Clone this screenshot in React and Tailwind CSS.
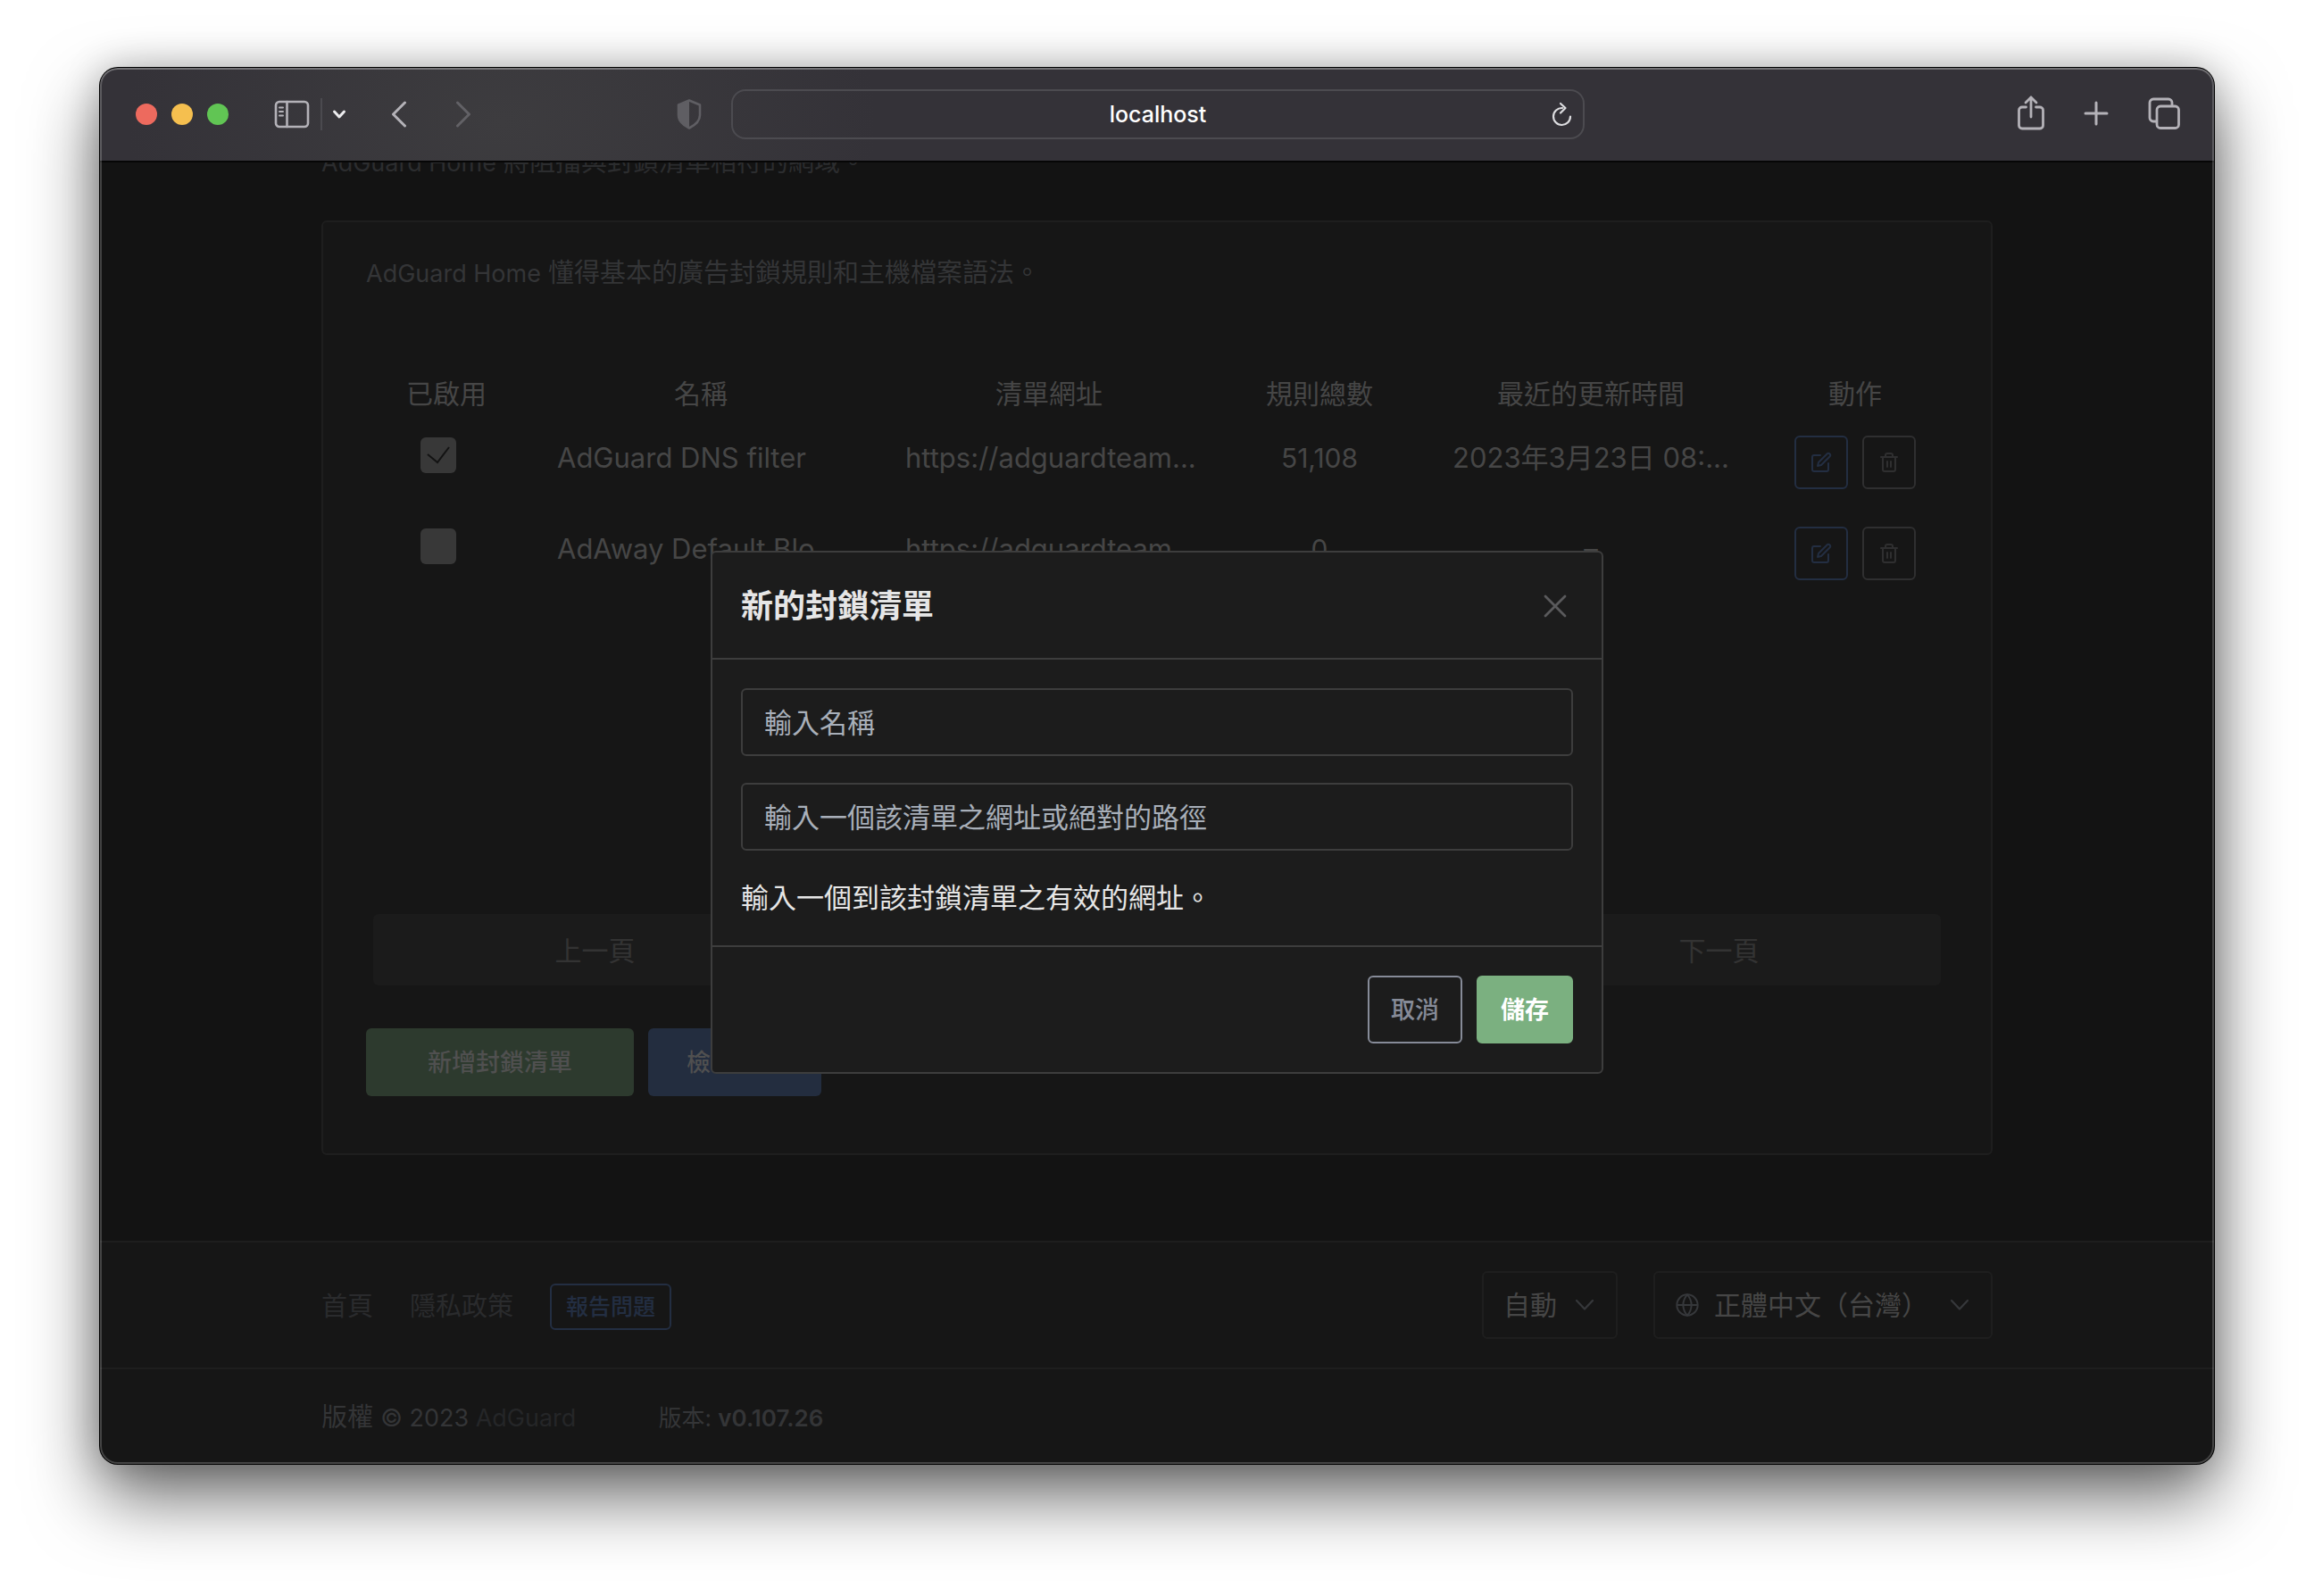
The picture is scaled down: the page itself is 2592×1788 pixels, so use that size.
import React, { useState } from 'react';

const ROWS = [
  { name: 'AdGuard DNS filter', url: 'https://adguardteam...', rules: '51,108', updated: '2023年3月23日 08:...', enabled: true },
  { name: 'AdAway Default Blo...', url: 'https://adguardteam...', rules: '0', updated: '–', enabled: false },
];

export default function App() {
  return (
    <div className="min-h-screen bg-white px-28 pt-[76px] pb-[148px] font-['Inter','Noto_Sans_CJK_TC',sans-serif]">
      <div className="relative overflow-hidden rounded-[20px] bg-[#131313] shadow-[0_0_0_1px_#000,0_0_40px_rgba(0,0,0,0.22),0_36px_80px_rgba(0,0,0,0.6)]">
        <Toolbar />
        <div className="relative overflow-hidden">
          <FiltersPage />
          <Footer />
          <div className="absolute inset-0 flex items-center justify-center pb-0.5">
            <AddListModal />
          </div>
        </div>
        <div className="pointer-events-none absolute inset-0 rounded-[20px] shadow-[inset_0_2px_0_rgba(255,255,255,0.14),inset_0_0_0_2px_rgba(255,255,255,0.2)]" />
      </div>
    </div>
  );
}

function Toolbar() {
  return (
    <header className="flex h-[106px] items-center border-b-2 border-[#060606] bg-[#343238] bg-[radial-gradient(ellipse_420px_300px_at_450px_60px,#3d3c3f,transparent)] text-[#b4b2b8]">
      <div className="flex flex-1 items-center pl-10">
        <div className="flex gap-4">
          <button type="button" aria-label="關閉" className="size-6 rounded-full bg-[#ed6a5e]" />
          <button type="button" aria-label="最小化" className="size-6 rounded-full bg-[#f5bf4f]" />
          <button type="button" aria-label="全螢幕" className="size-6 rounded-full bg-[#61c554]" />
        </div>
        <button type="button" aria-label="側邊欄" className="ml-[51px]">
          <svg width="40" height="32" viewBox="0 0 40 32" fill="none" stroke="currentColor" strokeWidth="2.6" strokeLinecap="round">
            <rect x="2" y="2" width="36" height="28" rx="4" />
            <path d="M14.5 2v28" />
            <path d="M6 8.500h4M6 13h4M6 17.500h4" strokeWidth="2" />
          </svg>
        </button>
        <span className="ml-3 h-9 w-0.5 bg-[#4b4a4f]" />
        <button type="button" aria-label="分頁群組" className="ml-[11px] text-[#ececee]">
          <svg width="16" height="12" viewBox="0 0 16 12" fill="none" stroke="currentColor" strokeWidth="3" strokeLinecap="round" strokeLinejoin="round">
            <path d="M2.500 3 8 9l5.500-6" />
          </svg>
        </button>
        <button type="button" aria-label="上一頁" className="ml-[50px]">
          <svg width="18" height="30" viewBox="0 0 18 30" fill="none" stroke="currentColor" strokeWidth="3" strokeLinecap="round" strokeLinejoin="round">
            <path d="M15.500 2 2.500 15l13 13" />
          </svg>
        </button>
        <button type="button" aria-label="下一頁" className="ml-[54px] text-[#626166]">
          <svg width="18" height="30" viewBox="0 0 18 30" fill="none" stroke="currentColor" strokeWidth="3" strokeLinecap="round" strokeLinejoin="round">
            <path d="m2.500 2 13 13-13 13" />
          </svg>
        </button>
        <button type="button" aria-label="隱私權報告" className="mr-[33px] ml-auto text-[#5f5e63]">
          <svg width="28" height="34" viewBox="0 0 28 34" fill="none">
            <path d="M14 1.500 26 6.500V18c0 6-5 11-12 14.500C7 29 2 24 2 18V6.500Z" stroke="currentColor" strokeWidth="2.600" strokeLinejoin="round" />
            <path d="M14 1.500 2 6.500V18c0 6 5 11 12 14.500Z" fill="currentColor" />
          </svg>
        </button>
      </div>

      <div className="flex h-14 w-2/5 min-w-0 max-w-[956px] grow items-center rounded-2xl border-2 border-[#4c4b50] pr-3 pl-9 text-white">
        <input aria-label="網址" defaultValue="localhost" className="min-w-0 flex-1 bg-transparent text-center text-[25px] leading-10 font-medium outline-none" />
        <button type="button" aria-label="重新載入">
          <svg width="24" height="28" viewBox="0 0 24 28" fill="none" stroke="#dddde0" strokeWidth="2.200" strokeLinecap="round" strokeLinejoin="round">
            <path d="M13 7a9.500 9.500 0 1 0 9 9.500" />
            <path d="m11 2 5.500 5-5.500 5.500" />
          </svg>
        </button>
      </div>

      <div className="flex flex-1 items-center justify-end pr-[38px] pb-0.5">
        <button type="button" aria-label="分享" className="pb-0.5">
          <svg width="32" height="40" viewBox="0 0 32 40" fill="none" stroke="currentColor" strokeWidth="2.800" strokeLinecap="round" strokeLinejoin="round">
            <path d="M10.500 14H6a3.500 3.500 0 0 0-3.500 3.500v17A3.500 3.500 0 0 0 6 38h20a3.500 3.500 0 0 0 3.500-3.500v-17A3.500 3.500 0 0 0 26 14h-4.500" />
            <path d="M16 25V3M10 9l6-6 6 6" />
          </svg>
        </button>
        <button type="button" aria-label="新增分頁" className="ml-[43px]">
          <svg width="28" height="28" viewBox="0 0 28 28" fill="none" stroke="currentColor" strokeWidth="3" strokeLinecap="round">
            <path d="M14 2v24M2 14h24" />
          </svg>
        </button>
        <button type="button" aria-label="分頁總覽" className="ml-11">
          <svg width="36" height="36" viewBox="0 0 36 36" fill="none" stroke="currentColor" strokeWidth="2.800">
            <rect x="10" y="10" width="24.500" height="24.500" rx="4" />
            <path d="M10 27H6a4 4 0 0 1-4-4V6a4 4 0 0 1 4-4h17a4 4 0 0 1 4 4v4" />
          </svg>
        </button>
      </div>
    </header>
  );
}

function FiltersPage() {
  return (
    <main className="mx-auto -mt-[22px] mb-24 max-w-[1872px]">
      <p className="mb-[42px] text-[29px] leading-[44px] text-[#2c2d2f]">
        <span className="text-[27px]">AdGuard Home</span> 將阻擋與封鎖清單相符的網域。
      </p>

      <section className="rounded-md border-2 border-[#1e1e1e] bg-[#161616] px-12 pt-[34px] pb-16">
        <p className="text-[29px] leading-[46px] text-[#343537]">
          <span className="text-[27px]">AdGuard Home</span> 懂得基本的廣告封鎖規則和主機檔案語法。
        </p>

        <div className="mt-[84px] min-h-[602px]">
          <table className="w-full table-fixed text-[#464646]">
            <colgroup>
              <col className="w-[180px]" />
              <col className="w-[390px]" />
              <col className="w-[390px]" />
              <col className="w-[216px]" />
              <col className="w-[392px]" />
              <col />
            </colgroup>
            <thead>
              <tr className="h-[54px] text-[30px]">
                <th className="font-normal">已啟用</th>
                <th className="font-normal">名稱</th>
                <th className="font-normal">清單網址</th>
                <th className="font-normal">規則總數</th>
                <th className="font-normal">最近的更新時間</th>
                <th className="pr-1 font-normal">動作</th>
              </tr>
            </thead>
            <tbody>
              {ROWS.map((row) => <FilterRow key={row.name} row={row} />)}
            </tbody>
          </table>
        </div>

        <div className="flex gap-2 p-2 text-[30px] text-[#333333]">
          <button type="button" disabled className="h-20 flex-[2] rounded-md bg-[#1b1b1b] pt-0.5">上一頁</button>
          <div className="flex-[3]" />
          <button type="button" disabled className="h-20 flex-[2] rounded-md bg-[#1b1b1b] pt-0.5">下一頁</button>
        </div>

        <div className="mt-10 flex gap-4 text-[27px] font-medium text-[#505050]">
          <button type="button" className="h-[76px] w-[300px] rounded-md bg-[#2d3a2e] pt-0.5">新增封鎖清單</button>
          <button type="button" className="h-[76px] rounded-md bg-[#232d3f] px-[43px] pt-0.5">檢查更新</button>
        </div>
      </section>
    </main>
  );
}

function FilterRow({ row }) {
  const [enabled, setEnabled] = useState(row.enabled);

  return (
    <tr className="h-[102px] align-top text-[31px] leading-[50px] whitespace-nowrap">
      <td className="pt-[22px] pr-[18px]">
        <span className="grid justify-center">
          <input type="checkbox" aria-label={row.name} checked={enabled}
                 onChange={(e) => setEnabled(e.target.checked)}
                 className="col-start-1 row-start-1 size-10 appearance-none rounded-md bg-[#383838]" />
          {enabled && (
            <svg width="40" height="40" viewBox="0 0 40 40" fill="none" stroke="#131313" strokeWidth="2"
                 className="pointer-events-none col-start-1 row-start-1">
              <path d="m8 19 11 9L32 11" />
            </svg>
          )}
        </span>
      </td>
      <td className="px-[34px] pt-5">{row.name}</td>
      <td className="px-[34px] pt-5">{row.url}</td>
      <td className="pt-5 text-center text-[30px]">{row.rules}</td>
      <td className="pt-5 text-center">{row.updated}</td>
      <td className="pt-5 pr-1">
        <div className="flex justify-center gap-4">
          <button type="button" aria-label="編輯" className="flex size-[60px] items-center justify-center rounded-md border-2 border-[#232e42] text-[#232e42]">
            <svg width="24" height="24" viewBox="0 0 24 24" fill="none" stroke="currentColor" strokeWidth="2" strokeLinecap="round" strokeLinejoin="round">
              <path d="M11 4H4a2 2 0 0 0-2 2v14a2 2 0 0 0 2 2h14a2 2 0 0 0 2-2v-7" />
              <path d="M18.500 2.500a2.121 2.121 0 0 1 3 3L12 15l-4 1 1-4 9.500-9.500z" />
            </svg>
          </button>
          <button type="button" aria-label="刪除" className="flex size-[60px] items-center justify-center rounded-md border-2 border-[#2f2f30] text-[#2f2f30]">
            <svg width="24" height="24" viewBox="0 0 24 24" fill="none" stroke="currentColor" strokeWidth="2" strokeLinecap="round" strokeLinejoin="round">
              <path d="M3 6h18" />
              <path d="M19 6v14a2 2 0 0 1-2 2H7a2 2 0 0 1-2-2V6m3 0V4a2 2 0 0 1 2-2h4a2 2 0 0 1 2 2v2" />
              <path d="M10 11v6M14 11v6" />
            </svg>
          </button>
        </div>
      </td>
    </tr>
  );
}

function Footer() {
  return (
    <footer className="bg-[#161616] text-[29px] text-[#2a2b2d]">
      <div className="border-t-2 border-[#1e1e1e]">
        <div className="mx-auto flex h-[140px] max-w-[1872px] items-center justify-between">
          <nav className="flex items-center gap-[41px] pt-1">
            <a href="#home">首頁</a>
            <a href="#privacy">隱私政策</a>
            <a href="#report" className="rounded-md border-2 border-[#232e42] px-4 text-[25px] leading-[48px] font-medium text-[#232e42]">報告問題</a>
          </nav>
          <div className="flex gap-10 text-[30px] text-[#464646]">
            <label className="flex h-[76px] w-[152px] items-center rounded-md border-2 border-[#1e1e1e] pr-6 pl-[22px]">
              <select aria-label="主題" className="min-w-0 flex-1 appearance-none bg-transparent outline-none">
                <option>自動</option>
              </select>
              <Chevron />
            </label>
            <label className="flex h-[76px] w-[380px] items-center rounded-md border-2 border-[#1e1e1e] pr-6 pl-[22px]">
              <svg width="28" height="28" viewBox="0 0 24 24" fill="none" stroke="#36383b" strokeWidth="1.700" className="mr-4">
                <circle cx="12" cy="12" r="10" />
                <path d="M2 12h20M12 2a15.300 15.300 0 0 1 4 10 15.300 15.300 0 0 1-4 10 15.300 15.300 0 0 1-4-10 15.300 15.300 0 0 1 4-10z" />
              </svg>
              <select aria-label="語言" className="min-w-0 flex-1 appearance-none bg-transparent outline-none">
                <option>正體中文（台灣）</option>
              </select>
              <Chevron />
            </label>
          </div>
        </div>
      </div>
      <div className="border-t-2 border-[#1e1e1e]">
        <div className="mx-auto flex h-[106px] max-w-[1872px] items-center gap-[92px] pt-0.5 text-[#343537]">
          <div>版權 <span className="text-[27px]">© 2023 <a href="#adguard" className="text-[#252628]">AdGuard</a></span></div>
          <div className="text-[26px]">版本: <span className="font-semibold">v0.107.26</span></div>
        </div>
      </div>
    </footer>
  );
}

function Chevron() {
  return (
    <svg width="22" height="14" viewBox="0 0 22 14" fill="none" stroke="#36383b" strokeWidth="2.200" strokeLinecap="round" strokeLinejoin="round" className="pointer-events-none">
      <path d="m2 2 9 9.500L20 2" />
    </svg>
  );
}

function AddListModal() {
  return (
    <form role="dialog" aria-labelledby="modal-title" onSubmit={(e) => e.preventDefault()}
          className="w-full max-w-[1000px] rounded-md border-2 border-[#3d3d3d] bg-[#1c1c1c] text-[31px] text-[#e6e6e6]">
      <div className="flex h-[120px] items-center justify-between border-b-2 border-[#3d3d3d] px-8 pt-0.5">
        <h4 id="modal-title" className="text-[36px] font-bold">新的封鎖清單</h4>
        <button type="button" aria-label="關閉" className="px-1.5 text-[#5a5a5c]">
          <svg width="28" height="28" viewBox="0 0 28 28" fill="none" stroke="currentColor" strokeWidth="2.800" strokeLinecap="round">
            <path d="m3 3 22 22M25 3 3 25" />
          </svg>
        </button>
      </div>

      <div className="px-8 pt-8 pb-[30px]">
        <input type="text" aria-label="輸入名稱" placeholder="輸入名稱"
               className="mb-[30px] block h-[76px] w-full rounded-md border-2 border-[#3d3d3d] bg-transparent px-6 outline-none placeholder:text-[#a8afb9]" />
        <input type="text" aria-label="輸入一個該清單之網址或絕對的路徑" placeholder="輸入一個該清單之網址或絕對的路徑"
               className="mb-[30px] block h-[76px] w-full rounded-md border-2 border-[#3d3d3d] bg-transparent px-6 outline-none placeholder:text-[#a8afb9]" />
        <p className="leading-[46px]">輸入一個到該封鎖清單之有效的網址。</p>
      </div>

      <div className="flex justify-end gap-4 border-t-2 border-[#3d3d3d] p-8 text-[27px]">
        <button type="button" className="h-[76px] rounded-md border-2 border-[#868b98] px-6 pt-0.5 font-medium text-[#868b98]">取消</button>
        <button type="submit" className="h-[76px] rounded-md border-2 border-[#7bb080] bg-[#7bb080] px-[25px] pt-0.5 font-bold text-white">儲存</button>
      </div>
    </form>
  );
}
